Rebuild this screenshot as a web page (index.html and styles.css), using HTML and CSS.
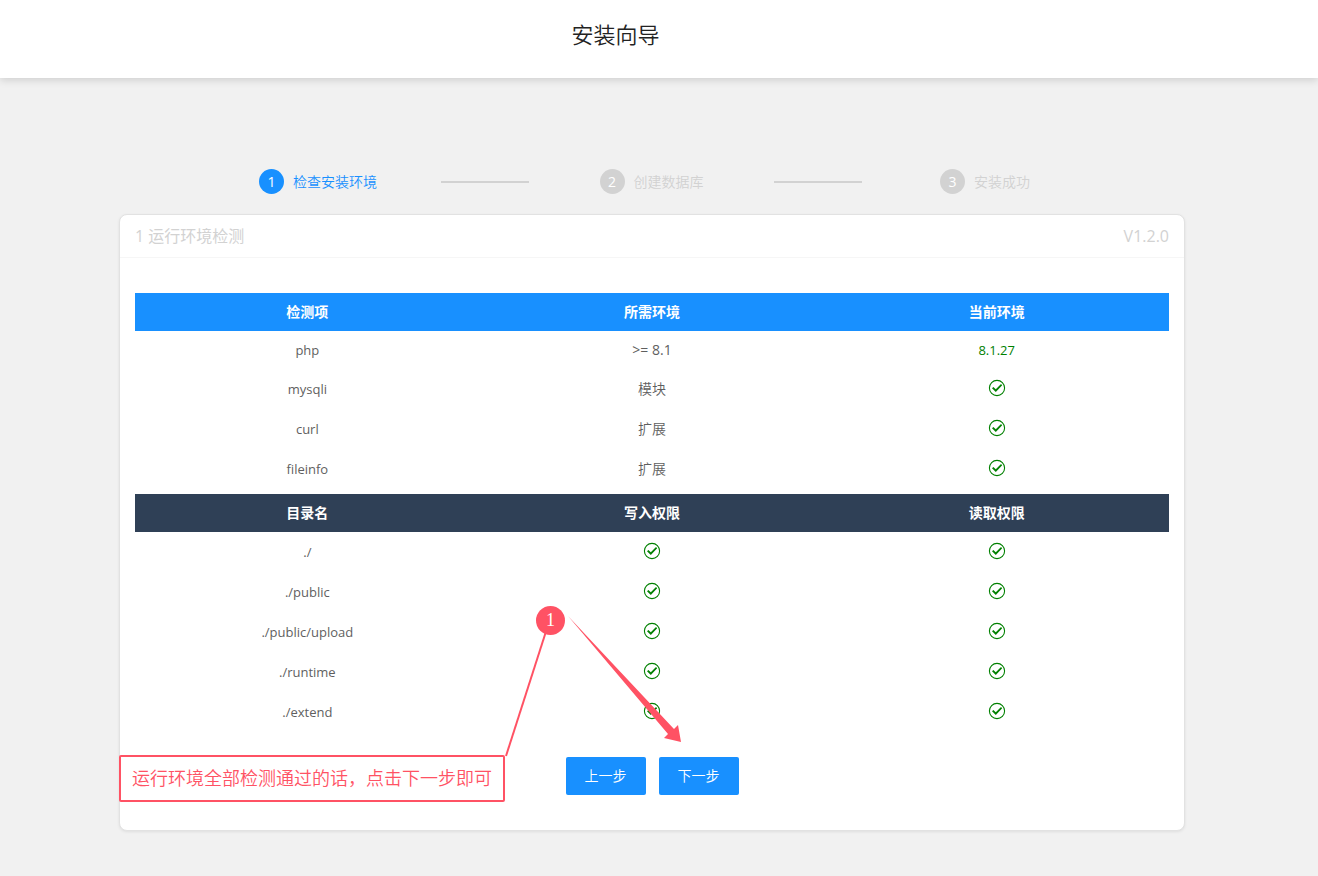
FILE: index.html
```html
<!DOCTYPE html>
<html lang="zh-CN">
<head>
<meta charset="utf-8">
<title>安装向导</title>
<link rel="stylesheet" href="styles.css">
</head>
<body>
<svg class="defs" aria-hidden="true">
  <symbol id="ok" viewBox="0 0 18 18">
    <circle cx="9" cy="9" r="7.6" fill="none" stroke="currentColor" stroke-width="1.1"/>
    <path d="M4 9.300L5.400 8.100 7.800 10.300 13 5.100 14.200 6.300 7.800 12.900Z" fill="currentColor"/>
  </symbol>
</svg>
<header class="topbar"><h1 class="title">安装向导</h1></header>
<main class="page">
  <ol class="steps">
    <li class="step step-active"><span class="num">1</span><span class="name">检查安装环境</span><span class="bar"></span></li>
    <li class="step"><span class="num">2</span><span class="name">创建数据库</span><span class="bar"></span></li>
    <li class="step step-last"><span class="num">3</span><span class="name">安装成功</span></li>
  </ol>
  <section class="card">
    <div class="card-head"><h2 class="card-title">1 运行环境检测</h2><span>V1.2.0</span></div>
    <div class="card-body">
      <table class="table">
        <thead><tr><th>检测项</th><th>所需环境</th><th>当前环境</th></tr></thead>
        <tbody>
          <tr class="compact"><td>php</td><td>&gt;= 8.1</td><td class="pass">8.1.27</td></tr>
          <tr><td>mysqli</td><td>模块</td><td class="pass"><svg class="ok"><use href="#ok"/></svg></td></tr>
          <tr><td>curl</td><td>扩展</td><td class="pass"><svg class="ok"><use href="#ok"/></svg></td></tr>
          <tr><td>fileinfo</td><td>扩展</td><td class="pass"><svg class="ok"><use href="#ok"/></svg></td></tr>
        </tbody>
      </table>
      <table class="table table-dark">
        <thead><tr><th>目录名</th><th>写入权限</th><th>读取权限</th></tr></thead>
        <tbody>
          <tr><td>./</td><td class="pass"><svg class="ok"><use href="#ok"/></svg></td><td class="pass"><svg class="ok"><use href="#ok"/></svg></td></tr>
          <tr><td>./public</td><td class="pass"><svg class="ok"><use href="#ok"/></svg></td><td class="pass"><svg class="ok"><use href="#ok"/></svg></td></tr>
          <tr><td>./public/upload</td><td class="pass"><svg class="ok"><use href="#ok"/></svg></td><td class="pass"><svg class="ok"><use href="#ok"/></svg></td></tr>
          <tr><td>./runtime</td><td class="pass"><svg class="ok"><use href="#ok"/></svg></td><td class="pass"><svg class="ok"><use href="#ok"/></svg></td></tr>
          <tr><td>./extend</td><td class="pass"><svg class="ok"><use href="#ok"/></svg></td><td class="pass"><svg class="ok"><use href="#ok"/></svg></td></tr>
        </tbody>
      </table>
      <div class="actions">
        <button type="button" class="btn">上一步</button>
        <button type="button" class="btn">下一步</button>
      </div>
    </div>
    <svg class="pointer" viewBox="0 0 180 156" aria-hidden="true">
      <path d="M40.500 28L1 151" stroke="#ff5264" stroke-width="2" fill="none"/>
      <path d="M63 11L169 124 173 120 176 137 159 133 163 129Z" fill="#ff5264"/>
    </svg>
    <span class="badge">1</span>
    <div class="note">运行环境全部检测通过的话，点击下一步即可</div>
  </section>
</main>
</body>
</html>
```
FILE: styles.css
```css
* { box-sizing: border-box; }
body {
  margin: 0;
  background: #f1f1f1;
  color: #5f5f5f;
  font: 400 14px/20px "Open Sans", "Noto Sans CJK SC", sans-serif;
}
.defs { position: absolute; width: 0; height: 0; }
.topbar {
  height: 78px;
  padding: 18px 87px 0 0;
  background: #fff;
  box-shadow: 0 2px 8px rgba(0, 0, 0, .15);
  text-align: center;
}
.title { margin: 0; color: #222; font-size: 22px; font-weight: 350; line-height: 32px; }
.page { padding: 91px 133px 45px 119px; }
.steps {
  display: flex;
  margin: 0 0 20px;
  padding: 0 155px 0 140px;
  list-style: none;
  color: #d2d2d2;
}
.step { flex: 1 1 0; display: flex; align-items: center; padding-right: 7px; }
.step-last { flex: 0 0 90px; padding-right: 0; }
.step-active { color: #1890ff; }
.name { font-weight: 350; }
.num {
  width: 25px;
  margin-right: 9px;
  border-radius: 50%;
  background: #d2d2d2;
  color: #fff;
  line-height: 25px;
  text-align: center;
}
.step-active .num { background: #1890ff; }
.bar { width: 88px; height: 2px; margin: 0 auto; background: #d2d2d2; }
.card {
  position: relative;
  border: 1px solid #e2e2e2;
  border-radius: 8px;
  background: #fff;
  box-shadow: 0 1px 3px rgba(0, 0, 0, .08);
}
.card-head {
  display: flex;
  justify-content: space-between;
  padding: 0 15px;
  border-bottom: 1px solid #f6f6f6;
  color: #d2d2d2;
  font-size: 16px;
  line-height: 42px;
}
.card-title { margin: 0; font-size: 16px; font-weight: 400; }
.card-body { padding: 35px 15px; }
.table { width: 100%; border-collapse: collapse; table-layout: fixed; text-align: center; font-size: 13px; }
.table th { height: 38px; padding: 0; background: #1890ff; color: #fff; font-size: 14px; font-weight: 700; }
.table td { height: 40px; padding: 0; }
.table td:nth-child(2) { font-size: 14px; font-weight: 350; }
.table .compact td { height: 38px; font-weight: 400; }
.table .pass { color: #008000; }
.table-dark { margin-top: 5px; }
.table-dark th { background: #2f4056; }
.ok { display: block; width: 18px; height: 18px; margin: 0 auto 2px; }
.actions { display: flex; justify-content: center; gap: 13px; margin-top: 25px; }
.btn {
  width: 80px;
  height: 38px;
  padding: 0;
  border: 0;
  border-radius: 2px;
  background: #1890ff;
  color: #fff;
  font: inherit;
  font-weight: 350;
}
.note {
  position: absolute;
  left: -1px;
  top: 540px;
  padding: 0 11px;
  border: 2px solid #ff5264;
  border-radius: 2px;
  color: #ff5264;
  font-size: 18px;
  font-weight: 350;
  line-height: 43px;
  white-space: nowrap;
}
.pointer { position: absolute; left: 385px; top: 390px; width: 180px; height: 156px; }
.badge {
  position: absolute;
  left: 416px;
  top: 391px;
  width: 29px;
  border-radius: 50%;
  background: #ff5264;
  color: #fff;
  font: 18px/29px "Liberation Serif", serif;
  text-align: center;
}
```
